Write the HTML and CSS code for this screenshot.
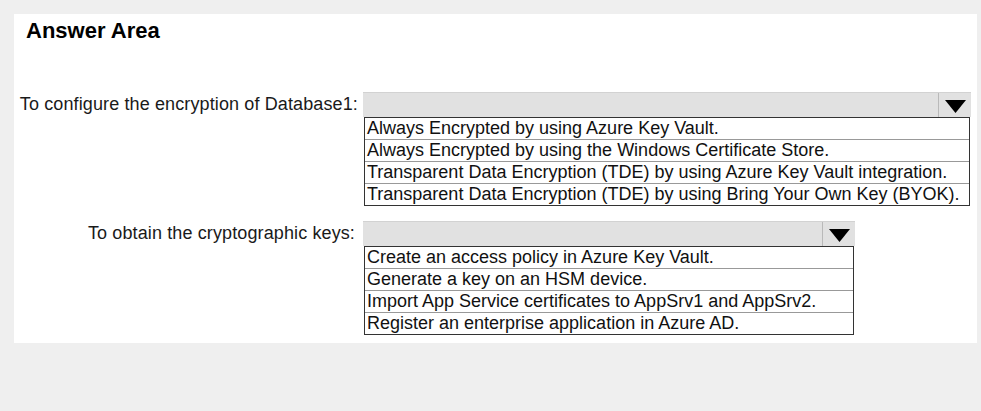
FILE: index.html
```html
<!DOCTYPE html>
<html>
<head>
<meta charset="utf-8">
<link rel="stylesheet" href="styles.css">
</head>
<body>
<div class="panel">
  <h1 class="title">Answer Area</h1>
  <div class="qa">
    <div class="row">
      <div class="label">To configure the encryption of Database1:</div>
      <div class="control wide">
        <div class="select">
          <div class="value"></div>
          <div class="arrow"><svg width="21" height="13" viewBox="0 0 21 13"><polygon points="0,0 21,0 10.5,13" fill="#000"/></svg></div>
        </div>
        <ul class="options">
          <li>Always Encrypted by using Azure Key Vault.</li>
          <li>Always Encrypted by using the Windows Certificate Store.</li>
          <li>Transparent Data Encryption (TDE) by using Azure Key Vault integration.</li>
          <li>Transparent Data Encryption (TDE) by using Bring Your Own Key (BYOK).</li>
        </ul>
      </div>
    </div>
    <div class="row">
      <div class="label second">To obtain the cryptographic keys:</div>
      <div class="control narrow">
        <div class="select">
          <div class="value"></div>
          <div class="arrow"><svg width="21" height="13" viewBox="0 0 21 13"><polygon points="0,0 21,0 10.5,13" fill="#000"/></svg></div>
        </div>
        <ul class="options">
          <li>Create an access policy in Azure Key Vault.</li>
          <li>Generate a key on an HSM device.</li>
          <li>Import App Service certificates to AppSrv1 and AppSrv2.</li>
          <li>Register an enterprise application in Azure AD.</li>
        </ul>
      </div>
    </div>
  </div>
</div>
</body>
</html>
```
FILE: styles.css
```css
html, body {
  margin: 0;
  padding: 0;
}
body {
  background: #efefef;
  width: 981px;
  height: 411px;
  font-family: "Liberation Sans", Arial, sans-serif;
  color: #111;
  overflow: hidden;
}
.panel {
  margin: 14px 0 0 14px;
  width: 963px;
  height: 329px;
  box-sizing: border-box;
  background: #fff;
  padding-top: 3px;
}
.title {
  margin: 0 0 0 12px;
  font-size: 22px;
  line-height: 27px;
  font-weight: bold;
  color: #000;
}
.qa {
  margin-top: 48px;
  display: flex;
  flex-direction: column;
  gap: 15px;
}
.row {
  display: grid;
  grid-template-columns: 349px auto;
  align-items: start;
}
.label {
  font-size: 18px;
  line-height: 25px;
  height: 25px;
  text-align: right;
  padding-right: 5px;
  letter-spacing: 0.12px;
  white-space: nowrap;
  color: #1a1a1a;
}
.label.second {
  padding-right: 8px;
}
.control.wide { width: 608px; }
.control.narrow { width: 492px; }
.select {
  display: flex;
  height: 25px;
  box-sizing: border-box;
  background: #e1e1e1;
  border-top: 1px solid #d2d2d2;
}
.value {
  flex: 1;
}
.arrow {
  width: 33px;
  border-left: 1px solid #b9b9b9;
  display: flex;
  align-items: center;
  justify-content: center;
  padding-top: 2px;
  box-sizing: border-box;
}
.arrow svg { display: block; }
.options {
  list-style: none;
  margin: 0 1px 0 1px;
  padding: 0;
  border: 1px solid #333;
  background: #fff;
}
.options li {
  font-size: 18px;
  line-height: 21px;
  height: 21px;
  padding-left: 2px;
  white-space: nowrap;
  color: #111;
  border-top: 1px solid #999;
}
.options li:first-child {
  border-top: none;
}
```
